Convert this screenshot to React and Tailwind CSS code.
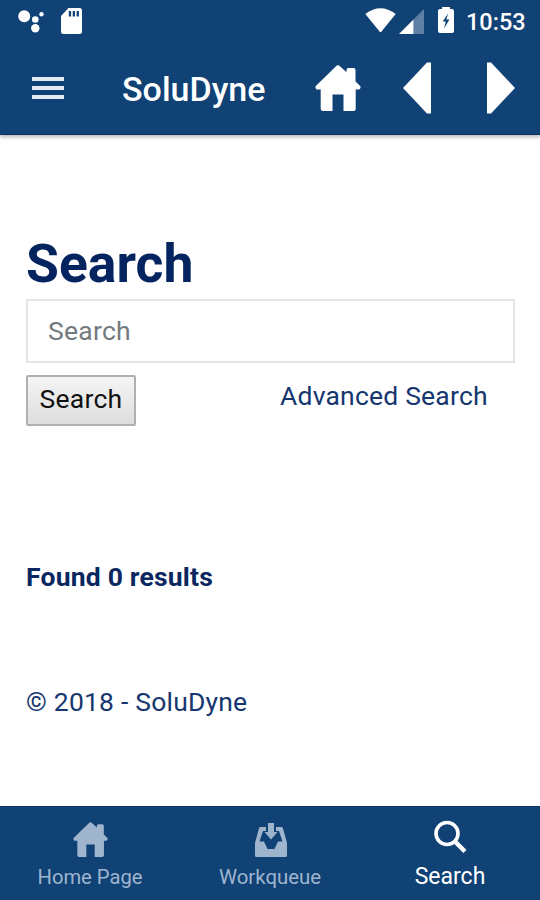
function House({ className }) {
  return (
    <svg className={className} viewBox="0 0 46 46" fill="currentColor">
      <path d="M23 0.3Q22 0.3 20.8 1.5L0.8 21Q-0.3 23 1.8 24.5H5.7V43.5Q5.7 46 8.2 46H17.5V29.5H28.5V46H38.2Q40.7 46 40.7 43.5V24.5H44.2Q46.3 23 45.2 21L40.5 16.4V5Q40.5 3 38.5 3H33.5Q31.5 3 31.5 5V7.2L25.2 1.5Q24 0.3 23 0.3Z" />
    </svg>
  );
}

function StatusBar() {
  return (
    <div className="flex h-[43px] items-start text-white">
      <svg className="ml-[17px] mt-[9px] h-6 w-7" viewBox="0 0 28 24" fill="currentColor">
        <circle cx="7.2" cy="7.3" r="6" />
        <circle cx="18.3" cy="10.5" r="3.3" />
        <circle cx="24.5" cy="5.2" r="2.2" />
        <circle cx="18.3" cy="19.3" r="4.2" />
      </svg>
      <svg className="ml-4 mt-2 h-[26px] w-[21px]" viewBox="0 0 21 26">
        <path fill="white" d="M7.5 0H18.5Q21 0 21 2.5V23.5Q21 26 18.5 26H2.5Q0 26 0 23.5V8Z" />
        <path fill="#104275" d="M7.8 3h2.3v5.4H7.8zM11.7 3h2.3v5.4h-2.3zM15.6 3h2.3v5.4h-2.3z" />
      </svg>
      <svg className="ml-auto mt-2 h-6 w-[31px]" viewBox="0 0 31 24" fill="currentColor">
        <path d="M0.3 6Q15.5 -5.5 30.7 6L16.5 23.5Q15.5 24.5 14.5 23.5Z" />
      </svg>
      <svg className="ml-[3px] mt-[9px] h-[25px] w-[25px]" viewBox="0 0 25 25">
        <path fill="#5f7fa4" d="M14.5 10.5L25 0V25H14.5Z" />
        <path fill="white" d="M0 25L14.5 10.5V25Z" />
      </svg>
      <svg className="ml-[14px] mt-[7px] h-[26px] w-4" viewBox="0 0 16 26">
        <path fill="white" d="M4 0H12V2H14Q16 2 16 4V24Q16 26 14 26H2Q0 26 0 24V4Q0 2 2 2H4Z" />
        <path fill="#104275" d="M10 6.5L4.7 14.5H7.8L6 21.5L11.5 12.5H8.4Z" />
      </svg>
      <span className="ml-[12px] mr-[14px] mt-[7px] w-[60px] whitespace-nowrap text-[23.5px] font-medium leading-[30px]">10:53</span>
    </div>
  );
}

export default function App() {
  return (
    <div className="flex h-[900px] w-[540px] flex-col overflow-hidden bg-white font-['Roboto',sans-serif] text-[#0b2760]">
      <header className="h-[135px] shrink-0 border-b border-[#0b3463] bg-[#104275] shadow-[0_2px_4px_rgba(0,0,0,0.3)]">
        <StatusBar />
        <div className="flex h-[90px] items-center text-white">
          <button className="ml-8 flex w-8 flex-col gap-[5px]" aria-label="Menu">
            <span className="h-1 w-8 bg-[#e3eaf1]" />
            <span className="h-1 w-8 bg-[#e3eaf1]" />
            <span className="h-1 w-8 bg-[#e3eaf1]" />
          </button>
          <h1 className="ml-[58px] w-[193px] whitespace-nowrap pt-px text-[34px] font-medium leading-[40px]">SoluDyne</h1>
          <House className="h-[46px] w-[46px]" />
          <svg className="ml-[42px] h-[52px] w-[28px]" viewBox="0 0 28 52" fill="currentColor">
            <path d="M0 26L24 0.5H28V51.5H24Z" />
          </svg>
          <svg className="ml-[56px] h-[52px] w-[28px]" viewBox="0 0 28 52" fill="currentColor">
            <path d="M28 26L4 0.5H0V51.5H4Z" />
          </svg>
        </div>
      </header>
      <main className="flex-1 px-[26px] pt-[99px]">
        <h2 className="text-[53.5px] font-bold leading-[60px] text-[#04245f]">Search</h2>
        <input className="mt-[5px] block h-[64px] w-[489px] border-2 border-[#e3e6e7] px-5 pb-[2px] text-[26.5px] tracking-[0.25px] placeholder:text-[#727a80] placeholder:opacity-100" placeholder="Search" />
        <div className="mt-3 flex items-start">
          <button className="h-[51px] w-[110px] rounded-[2px] border-2 border-[#b0b0b0] bg-linear-to-b from-[#f5f5f5] to-[#dddddd] pb-[3px] text-[26.5px] leading-[44px] tracking-[0.25px] text-[#111111]">Search</button>
          <a className="ml-[144px] mt-[5px] whitespace-nowrap text-[26.5px] leading-[32px] tracking-[0.2px] text-[#16366f]">Advanced Search</a>
        </div>
        <p className="mt-[135px] text-[26.5px] font-bold leading-[32px] tracking-[0.2px]">Found 0 results</p>
        <p className="mt-[93px] text-[26.5px] leading-[32px] tracking-[0.2px] text-[#16366f]">© 2018 - SoluDyne</p>
      </main>
      <nav className="grid h-[94px] shrink-0 grid-cols-3 border-t border-[#0b3463] bg-[#104275] text-[#9fb5ce]">
        <div className="flex flex-col items-center pt-[15px]">
          <House className="h-[35px] w-[35px]" />
          <span className="mt-[6px] text-[20.2px] leading-[28px]">Home Page</span>
        </div>
        <div className="flex flex-col items-center pt-4">
          <svg className="ml-px h-[34px] w-8" viewBox="0 0 32 34" fill="currentColor">
            <path fillRule="evenodd" d="M5.5 4H11V8H8L4.5 18.5H9L12.5 26H19.5L23 18.5H27.5L24 8H21V4H26.5Q27.5 4 27.9 5L32 20V32.5Q32 34 30.5 34H1.5Q0 34 0 32.5V20L4.1 5Q4.5 4 5.5 4Z" />
            <path d="M13 0H19V9H22.5L16 16.5L9.5 9H13Z" />
          </svg>
          <span className="mt-[6px] text-[20.4px] leading-[28px]">Workqueue</span>
        </div>
        <div className="flex flex-col items-center pt-[13px] text-white">
          <svg className="h-[34px] w-[34px]" viewBox="0 0 34 34" fill="none" stroke="currentColor" strokeWidth="3.6">
            <circle cx="14" cy="13.5" r="11" />
            <path d="M21.5 21L32 31.5" strokeWidth="4.5" />
          </svg>
          <span className="mt-[9px] text-[23px] leading-[28px]">Search</span>
        </div>
      </nav>
    </div>
  );
}
